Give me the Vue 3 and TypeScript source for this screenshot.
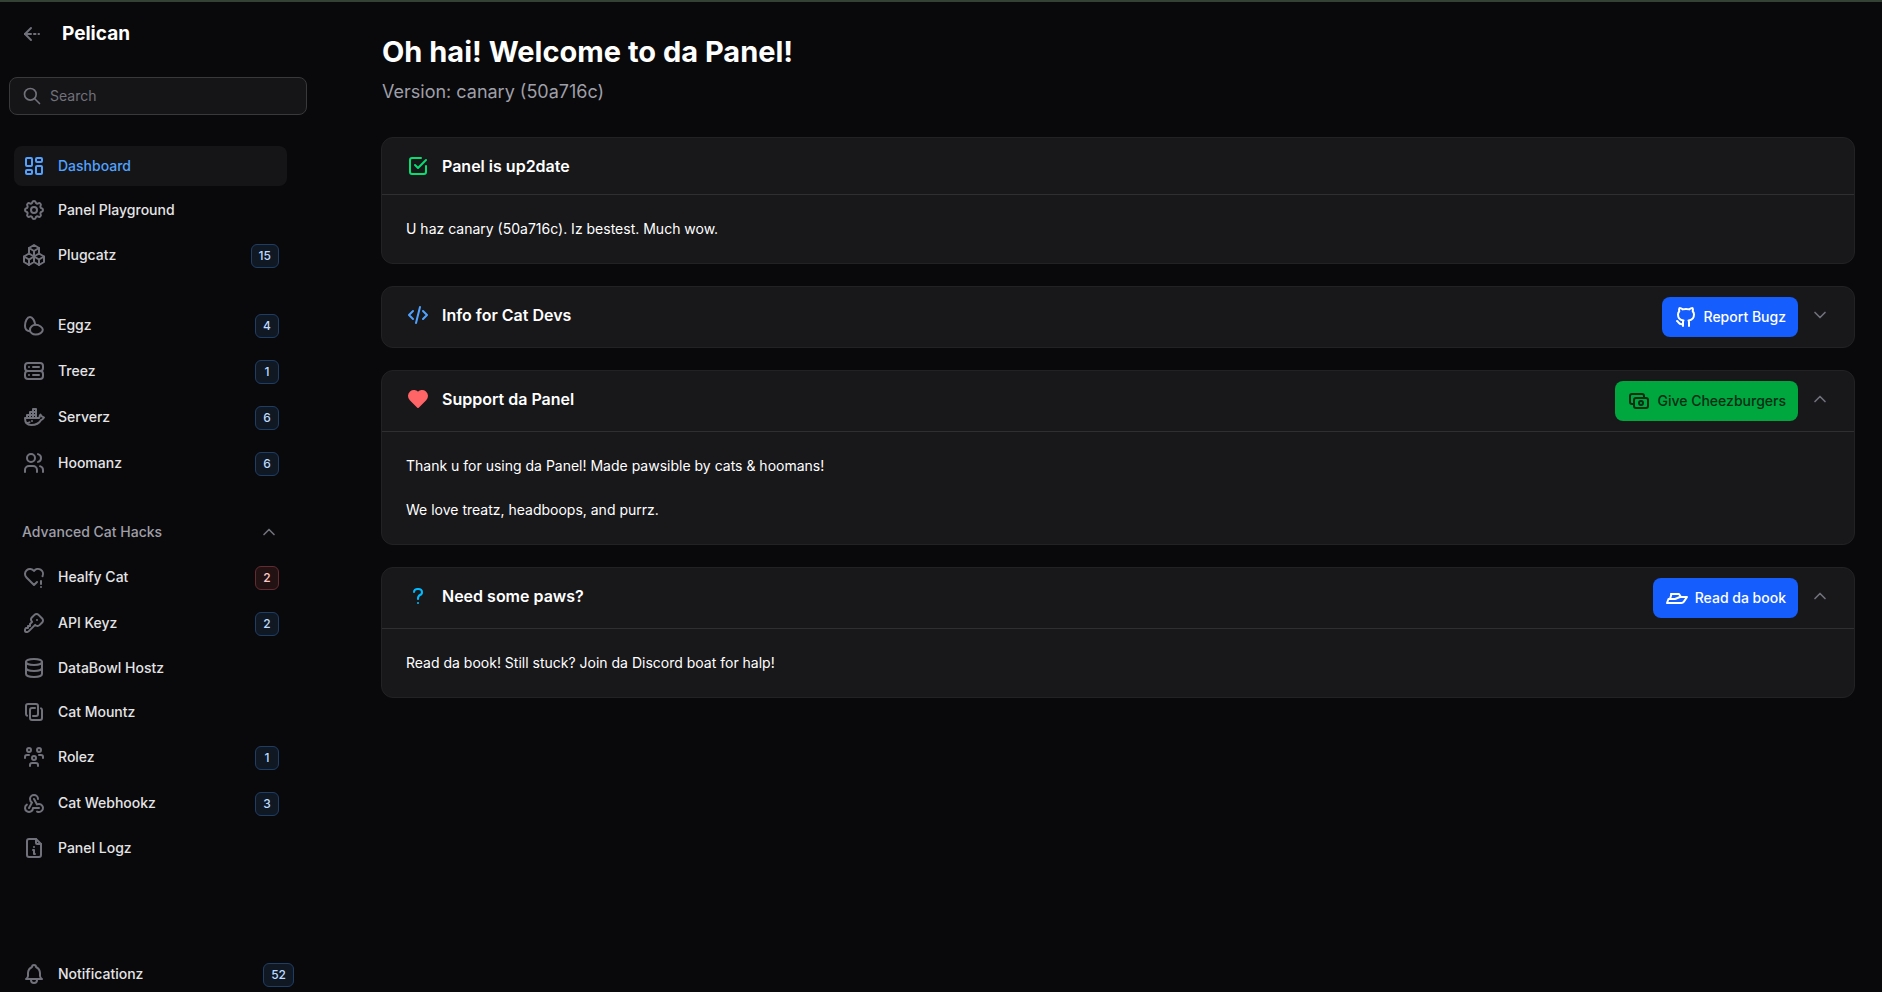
<script setup lang="ts">
import { ref } from 'vue'

interface NavItem {
  label: string
  icon: string
  badge?: number
  tone?: 'info' | 'danger'
  active?: boolean
}

interface Section {
  title: string
  icon: string
  tone: string
  lines: string[]
  collapsible: boolean
  open: boolean
  action?: { label: string; icon: string; tone: string }
}

const icons: Record<string, string[]> = {
  back: ['M5 12h6', 'M14 12h1.5', 'M18.5 12h.5', 'M5 12l6 6', 'M5 12l6 -6'],
  search: ['M3 10a7 7 0 1 0 14 0a7 7 0 1 0 -14 0', 'M21 21l-6 -6'],
  chevronUp: ['M6 15l6 -6l6 6'],
  chevronDown: ['M6 9l6 6l6 -6'],
  dashboard: [
    'M5 4h4a1 1 0 0 1 1 1v6a1 1 0 0 1 -1 1h-4a1 1 0 0 1 -1 -1v-6a1 1 0 0 1 1 -1',
    'M5 16h4a1 1 0 0 1 1 1v2a1 1 0 0 1 -1 1h-4a1 1 0 0 1 -1 -1v-2a1 1 0 0 1 1 -1',
    'M15 12h4a1 1 0 0 1 1 1v6a1 1 0 0 1 -1 1h-4a1 1 0 0 1 -1 -1v-6a1 1 0 0 1 1 -1',
    'M15 4h4a1 1 0 0 1 1 1v2a1 1 0 0 1 -1 1h-4a1 1 0 0 1 -1 -1v-2a1 1 0 0 1 1 -1',
  ],
  settings: [
    'M10.325 4.317c.426 -1.756 2.924 -1.756 3.35 0a1.724 1.724 0 0 0 2.573 1.066c1.543 -.94 3.31 .826 2.37 2.37a1.724 1.724 0 0 0 1.065 2.572c1.756 .426 1.756 2.924 0 3.35a1.724 1.724 0 0 0 -1.066 2.573c.94 1.543 -.826 3.31 -2.37 2.37a1.724 1.724 0 0 0 -2.572 1.065c-.426 1.756 -2.924 1.756 -3.35 0a1.724 1.724 0 0 0 -2.573 -1.066c-1.543 .94 -3.31 -.826 -2.37 -2.37a1.724 1.724 0 0 0 -1.065 -2.572c-1.756 -.426 -1.756 -2.924 0 -3.35a1.724 1.724 0 0 0 1.066 -2.573c-.94 -1.543 .826 -3.31 2.37 -2.37c1 .608 2.296 .07 2.572 -1.065z',
    'M9 12a3 3 0 1 0 6 0a3 3 0 0 0 -6 0',
  ],
  packages: [
    'M7 16.5l-5 -3l5 -3l5 3v5.5l-5 3z',
    'M2 13.5v5.5l5 3',
    'M7 16.545l5 -3.03',
    'M17 16.5l-5 -3l5 -3l5 3v5.5l-5 3z',
    'M12 19l5 3',
    'M17 16.5l5 -3',
    'M12 13.5v-5.5l-5 -3l5 -3l5 3v5.5',
    'M7 5.03v5.455',
    'M12 8l5 -3',
  ],
  eggs: [
    'M7.6 18.3c-2.7 -.4 -4.6 -2.8 -4.6 -5.6c0 -4.2 2.2 -8.7 5 -8.7c2.5 0 4.7 3.7 5.2 7.6',
    'M8 17c0 -3 2.6 -5.2 5.6 -5.2c3.8 0 7.2 2.7 7.2 5c0 2.6 -3.4 4.8 -7.2 4.8c-3 0 -5.6 -1.9 -5.6 -4.6z',
  ],
  server: [
    'M3 7a3 3 0 0 1 3 -3h12a3 3 0 0 1 3 3v2a3 3 0 0 1 -3 3h-12a3 3 0 0 1 -3 -3z',
    'M3 15a3 3 0 0 1 3 -3h12a3 3 0 0 1 3 3v2a3 3 0 0 1 -3 3h-12a3 3 0 0 1 -3 -3z',
    'M7 8v.01',
    'M7 16v.01',
    'M11 8h6',
    'M11 16h6',
  ],
  docker: [
    'M22 12.54c-1.804 -.345 -2.701 -1.08 -3.523 -2.94c-.487 .696 -1.102 1.568 -.92 2.4c.028 .238 -.32 1 -.557 1h-14c0 5.208 3.164 7 6.196 7c4.124 .022 7.828 -1.376 9.854 -5c1.146 -.101 2.296 -1.505 2.95 -2.46z',
    'M5 10h3v3h-3z',
    'M8 10h3v3h-3z',
    'M11 10h3v3h-3z',
    'M8 7h3v3h-3z',
    'M11 7h3v3h-3z',
    'M11 4h3v3h-3z',
    'M4.571 18c1.5 0 2.047 -.074 2.958 -.78',
    'M10 16l0 .01',
  ],
  users: [
    'M5 7a4 4 0 1 0 8 0a4 4 0 1 0 -8 0',
    'M3 21v-2a4 4 0 0 1 4 -4h4a4 4 0 0 1 4 4v2',
    'M16 3.13a4 4 0 0 1 0 7.75',
    'M21 21v-2a4 4 0 0 0 -3 -3.85',
  ],
  heartAlert: [
    'M15 17l-3 3l-7.5 -7.428a5 5 0 1 1 7.5 -6.566a5 5 0 0 1 8.5 5.194',
    'M19 16v3',
    'M19 22v.01',
  ],
  key: [
    'M16.555 3.843l3.602 3.602a2.877 2.877 0 0 1 0 4.069l-2.643 2.643a2.877 2.877 0 0 1 -4.069 0l-.301 -.301l-6.558 6.558a2 2 0 0 1 -1.239 .578l-.175 .008h-1.172a1 1 0 0 1 -.993 -.883l-.007 -.117v-1.172a2 2 0 0 1 .467 -1.284l.119 -.13l.414 -.414h2v-2h2v-2l2.144 -2.144l-.301 -.301a2.877 2.877 0 0 1 0 -4.069l2.643 -2.643a2.877 2.877 0 0 1 4.069 0z',
    'M15 9h.01',
  ],
  database: [
    'M4 6a8 3 0 1 0 16 0a8 3 0 1 0 -16 0',
    'M4 6v6a8 3 0 0 0 16 0v-6',
    'M4 12v6a8 3 0 0 0 16 0v-6',
  ],
  layers: [
    'M19 8.268a2 2 0 0 1 1 1.732v8a2 2 0 0 1 -2 2h-8a2 2 0 0 1 -2 -2v-8a2 2 0 0 1 2 -2h3',
    'M5 15.734a2 2 0 0 1 -1 -1.734v-8a2 2 0 0 1 2 -2h8a2 2 0 0 1 2 2v8a2 2 0 0 1 -2 2h-3',
  ],
  group: [
    'M10 13a2 2 0 1 0 4 0a2 2 0 0 0 -4 0',
    'M8 21v-1a2 2 0 0 1 2 -2h4a2 2 0 0 1 2 2v1',
    'M15 5a2 2 0 1 0 4 0a2 2 0 0 0 -4 0',
    'M17 10h2a2 2 0 0 1 2 2v1',
    'M5 5a2 2 0 1 0 4 0a2 2 0 0 0 -4 0',
    'M3 13v-1a2 2 0 0 1 2 -2h2',
  ],
  webhook: [
    'M4.876 13.61a4 4 0 1 0 6.124 3.39h6',
    'M15.066 20.502a4 4 0 1 0 1.934 -7.502c-.706 0 -1.424 .179 -2 .5l-3 -5.5',
    'M16 8a4 4 0 1 0 -8 0c0 1.506 .77 2.818 2 3.5l-3 5.5',
  ],
  fileInfo: [
    'M14 3v4a1 1 0 0 0 1 1h4',
    'M17 21h-10a2 2 0 0 1 -2 -2v-14a2 2 0 0 1 2 -2h7l5 5v11a2 2 0 0 1 -2 2z',
    'M11 14h1v4h1',
    'M12 11h.01',
  ],
  bell: [
    'M10 5a2 2 0 1 1 4 0a7 7 0 0 1 4 6v3a4 4 0 0 0 2 3h-16a4 4 0 0 0 2 -3v-3a7 7 0 0 1 4 -6',
    'M9 17v1a3 3 0 0 0 6 0v-1',
  ],
  checkbox: ['M9 11l3 3l8 -8', 'M20 12v6a2 2 0 0 1 -2 2h-12a2 2 0 0 1 -2 -2v-12a2 2 0 0 1 2 -2h9'],
  code: ['M7 8l-4 4l4 4', 'M17 8l4 4l-4 4', 'M14 4l-4 16'],
  heart: ['M19.5 12.572l-7.5 7.428l-7.5 -7.428a5 5 0 1 1 7.5 -6.566a5 5 0 1 1 7.5 6.572z'],
  question: ['M8 8a3.5 3 0 0 1 3.5 -3h1a3.5 3 0 0 1 3.5 3a3 3 0 0 1 -2 3a3 4 0 0 0 -2 4', 'M12 19l0 .01'],
  github: [
    'M9 19c-4.3 1.4 -4.3 -2.5 -6 -3m12 5v-3.5c0 -1 .1 -1.4 -.5 -2c2.8 -.3 5.5 -1.4 5.5 -6a4.6 4.6 0 0 0 -1.3 -3.2a4.2 4.2 0 0 0 -.1 -3.2s-1.1 -.3 -3.5 1.3a12.3 12.3 0 0 0 -6.2 0c-2.4 -1.6 -3.5 -1.3 -3.5 -1.3a4.2 4.2 0 0 0 -.1 3.2a4.6 4.6 0 0 0 -1.3 3.2c0 4.6 2.7 5.7 5.5 6c-.6 .6 -.6 1.2 -.5 2v3.5',
  ],
  cash: [
    'M7 11a2 2 0 0 1 2 -2h10a2 2 0 0 1 2 2v6a2 2 0 0 1 -2 2h-10a2 2 0 0 1 -2 -2z',
    'M12 14a2 2 0 1 0 4 0a2 2 0 1 0 -4 0',
    'M17 9v-2a2 2 0 0 0 -2 -2h-10a2 2 0 0 0 -2 2v6a2 2 0 0 0 2 2h2',
  ],
  boat: [
    'M2 17h14.4a3 3 0 0 0 2.5 -1.34l3.1 -4.66h-6.23a4 4 0 0 0 -1.49 .29l-3.56 1.42a4 4 0 0 1 -1.49 .29h-5.73l-1.5 4z',
    'M5 13l1.5 -5',
    'M6 8h8l2 3',
  ],
}

const query = ref('')
const advancedOpen = ref(true)

const mainGroups: NavItem[][] = [
  [
    { label: 'Dashboard', icon: 'dashboard', active: true },
    { label: 'Panel Playground', icon: 'settings' },
    { label: 'Plugcatz', icon: 'packages', badge: 15 },
  ],
  [
    { label: 'Eggz', icon: 'eggs', badge: 4 },
    { label: 'Treez', icon: 'server', badge: 1 },
    { label: 'Serverz', icon: 'docker', badge: 6 },
    { label: 'Hoomanz', icon: 'users', badge: 6 },
  ],
]

const advancedItems: NavItem[] = [
  { label: 'Healfy Cat', icon: 'heartAlert', badge: 2, tone: 'danger' },
  { label: 'API Keyz', icon: 'key', badge: 2 },
  { label: 'DataBowl Hostz', icon: 'database' },
  { label: 'Cat Mountz', icon: 'layers' },
  { label: 'Rolez', icon: 'group', badge: 1 },
  { label: 'Cat Webhookz', icon: 'webhook', badge: 3 },
  { label: 'Panel Logz', icon: 'fileInfo' },
]

const sections = ref<Section[]>([
  {
    title: 'Panel is up2date',
    icon: 'checkbox',
    tone: 'success',
    lines: ['U haz canary (50a716c). Iz bestest. Much wow.'],
    collapsible: false,
    open: true,
  },
  {
    title: 'Info for Cat Devs',
    icon: 'code',
    tone: 'primary',
    lines: [],
    collapsible: true,
    open: false,
    action: { label: 'Report Bugz', icon: 'github', tone: 'blue' },
  },
  {
    title: 'Support da Panel',
    icon: 'heart',
    tone: 'danger',
    lines: [
      'Thank u for using da Panel! Made pawsible by cats & hoomans!',
      'We love treatz, headboops, and purrz.',
    ],
    collapsible: true,
    open: true,
    action: { label: 'Give Cheezburgers', icon: 'cash', tone: 'green' },
  },
  {
    title: 'Need some paws?',
    icon: 'question',
    tone: 'info',
    lines: ['Read da book! Still stuck? Join da Discord boat for halp!'],
    collapsible: true,
    open: true,
    action: { label: 'Read da book', icon: 'boat', tone: 'blue' },
  },
])
</script>

<template>
  <div class="app">
    <aside class="sidebar">
      <header class="brand">
        <button type="button" class="icon-button" aria-label="Collapse sidebar">
          <svg class="icon" viewBox="0 0 24 24"><path v-for="d in icons.back" :key="d" :d="d" /></svg>
        </button>
        <a href="#" class="brand-name">Pelican</a>
      </header>

      <label class="search">
        <svg class="icon small" viewBox="0 0 24 24"><path v-for="d in icons.search" :key="d" :d="d" /></svg>
        <input v-model="query" type="search" placeholder="Search" aria-label="Search" />
      </label>

      <nav class="nav">
        <ul v-for="(group, g) in mainGroups" :key="g" class="nav-list">
          <li v-for="item in group" :key="item.label">
            <a href="#" class="nav-item" :class="{ active: item.active }">
              <svg class="icon" viewBox="0 0 24 24"><path v-for="d in icons[item.icon]" :key="d" :d="d" /></svg>
              <span class="nav-label">{{ item.label }}</span>
              <span v-if="item.badge" class="badge">{{ item.badge }}</span>
            </a>
          </li>
        </ul>

        <div class="nav-list">
          <button
            type="button"
            class="group-toggle"
            :aria-expanded="advancedOpen"
            @click="advancedOpen = !advancedOpen"
          >
            <span>Advanced Cat Hacks</span>
            <svg class="icon small" viewBox="0 0 24 24">
              <path v-for="d in advancedOpen ? icons.chevronUp : icons.chevronDown" :key="d" :d="d" />
            </svg>
          </button>
          <ul v-if="advancedOpen" class="nav-list">
            <li v-for="item in advancedItems" :key="item.label">
              <a href="#" class="nav-item">
                <svg class="icon" viewBox="0 0 24 24"><path v-for="d in icons[item.icon]" :key="d" :d="d" /></svg>
                <span class="nav-label">{{ item.label }}</span>
                <span v-if="item.badge" class="badge" :class="item.tone">{{ item.badge }}</span>
              </a>
            </li>
          </ul>
        </div>
      </nav>

      <footer class="sidebar-footer">
        <button type="button" class="nav-item compact">
          <svg class="icon" viewBox="0 0 24 24"><path v-for="d in icons.bell" :key="d" :d="d" /></svg>
          <span class="nav-label">Notificationz</span>
          <span class="badge">52</span>
        </button>
      </footer>
    </aside>

    <main class="content">
      <header class="page-header">
        <h1>Oh hai! Welcome to da Panel!</h1>
        <p>Version: canary (50a716c)</p>
      </header>

      <div class="sections">
        <section v-for="section in sections" :key="section.title" class="card">
          <header class="card-header">
            <svg class="icon" :class="[section.tone, { filled: section.icon === 'heart' }]" viewBox="0 0 24 24">
              <path v-for="d in icons[section.icon]" :key="d" :d="d" />
            </svg>
            <h2>{{ section.title }}</h2>
            <a v-if="section.action" href="#" class="action" :class="section.action.tone">
              <svg class="icon" viewBox="0 0 24 24">
                <path v-for="d in icons[section.action.icon]" :key="d" :d="d" />
              </svg>
              <span>{{ section.action.label }}</span>
            </a>
            <button
              v-if="section.collapsible"
              type="button"
              class="icon-button toggle"
              :aria-label="'Toggle ' + section.title"
              :aria-expanded="section.open"
              @click="section.open = !section.open"
            >
              <svg class="icon small" viewBox="0 0 24 24">
                <path v-for="d in section.open ? icons.chevronUp : icons.chevronDown" :key="d" :d="d" />
              </svg>
            </button>
          </header>
          <div v-if="section.open" class="card-body">
            <p v-for="line in section.lines" :key="line">{{ line }}</p>
          </div>
        </section>
      </div>
    </main>
  </div>
</template>

<style>
body {
  margin: 0;
  background: #09090b;
}
</style>

<style scoped>
*,
*::before,
*::after {
  box-sizing: border-box;
}

.app {
  display: flex;
  height: 100vh;
  border-top: 2px solid #344236;
  background: #09090b;
  color: #fff;
  font-family: Inter, "Liberation Sans", sans-serif;
  font-size: 14px;
  line-height: 20px;
}

h1,
h2,
p,
ul {
  margin: 0;
  padding: 0;
}

ul {
  list-style: none;
}

a {
  color: inherit;
  text-decoration: none;
}

button {
  margin: 0;
  padding: 0;
  border: 0;
  background: none;
  color: inherit;
  font: inherit;
  text-align: left;
  cursor: pointer;
}

.icon {
  display: block;
  flex: none;
  width: 24px;
  height: 24px;
  fill: none;
  stroke: currentColor;
  stroke-width: 2;
  stroke-linecap: round;
  stroke-linejoin: round;
  color: #71717b;
}

.icon.small {
  width: 20px;
  height: 20px;
}

.icon.filled {
  fill: currentColor;
}

.icon.success {
  color: #05df72;
}

.icon.primary {
  color: #51a2ff;
}

.icon.danger {
  color: #ff6467;
}

.icon.info {
  color: #00bcff;
}

.sidebar {
  display: flex;
  flex: none;
  flex-direction: column;
  width: 320px;
}

.brand {
  display: flex;
  align-items: center;
  gap: 18px;
  height: 64px;
  padding-left: 20px;
}

.brand-name {
  font-size: 19px;
  font-weight: 700;
  line-height: 28px;
}

.search {
  display: flex;
  flex: none;
  align-items: center;
  gap: 8px;
  height: 38px;
  margin: 11px 13px 31px 9px;
  padding: 0 12px;
  border: 1px solid #39393b;
  border-radius: 8px;
  background: #151517;
}

.search input {
  flex: 1;
  min-width: 0;
  padding: 0;
  border: 0;
  outline: 0;
  background: none;
  color: #fff;
  font: inherit;
}

.search input::placeholder {
  color: #71717b;
  opacity: 1;
}

.nav {
  display: flex;
  flex: 1;
  flex-direction: column;
  gap: 28px;
  min-height: 0;
  padding: 0 33px 0 14px;
}

.nav-list {
  display: flex;
  flex-direction: column;
  gap: 4px;
}

.nav-item {
  display: flex;
  align-items: center;
  gap: 12px;
  padding: 8px;
  border-radius: 8px;
  color: #e4e4e7;
  font-weight: 500;
}

.nav-item.active {
  background: #151517;
  color: #51a2ff;
}

.nav-item.active .icon {
  color: #51a2ff;
}

.nav-item.compact {
  width: 100%;
  padding: 4px 8px;
}

.nav-label {
  flex: 1;
}

.badge {
  min-width: 24px;
  height: 24px;
  margin-top: 2px;
  padding: 0 7px;
  border: 1px solid #1f3e66;
  border-radius: 6px;
  background: #101823;
  color: #bedbff;
  font-size: 12px;
  line-height: 22px;
  text-align: center;
}

.badge.danger {
  border-color: #642b30;
  background: #221214;
  color: #ffc9c9;
}

.group-toggle {
  display: flex;
  align-items: center;
  justify-content: space-between;
  height: 40px;
  padding: 0 8px;
  color: #9f9fa9;
  font-weight: 500;
}

.sidebar-footer {
  padding: 0 18px 1px 14px;
}

.content {
  flex: 1;
  min-width: 0;
  padding: 32px 27px 32px 61px;
}

.page-header {
  padding-left: 1px;
}

.page-header h1 {
  font-size: 29px;
  font-weight: 700;
  line-height: 36px;
}

.page-header p {
  margin-top: 8px;
  color: #9f9fa9;
  font-size: 18px;
  line-height: 28px;
}

.sections {
  display: flex;
  flex-direction: column;
  gap: 22px;
  margin-top: 31px;
}

.card {
  border: 1px solid #222224;
  border-radius: 12px;
  background: #18181b;
}

.card-header {
  display: flex;
  align-items: flex-start;
  gap: 12px;
  padding: 16px 24px;
}

.card-header h2 {
  flex: 1;
  font-size: 16px;
  font-weight: 600;
  line-height: 24px;
}

.toggle {
  padding: 2px 0;
}

.action {
  display: flex;
  align-items: center;
  gap: 6px;
  height: 40px;
  margin: -6px 0;
  padding: 0 12px;
  border-radius: 8px;
  font-weight: 500;
}

.action .icon {
  color: inherit;
}

.action.blue {
  background: #155dfc;
  color: #fff;
}

.action.green {
  background: #00a63e;
  color: #032e15;
}

.card-body {
  display: flex;
  flex-direction: column;
  gap: 24px;
  padding: 24px;
  border-top: 1px solid #2f2f32;
}
</style>
